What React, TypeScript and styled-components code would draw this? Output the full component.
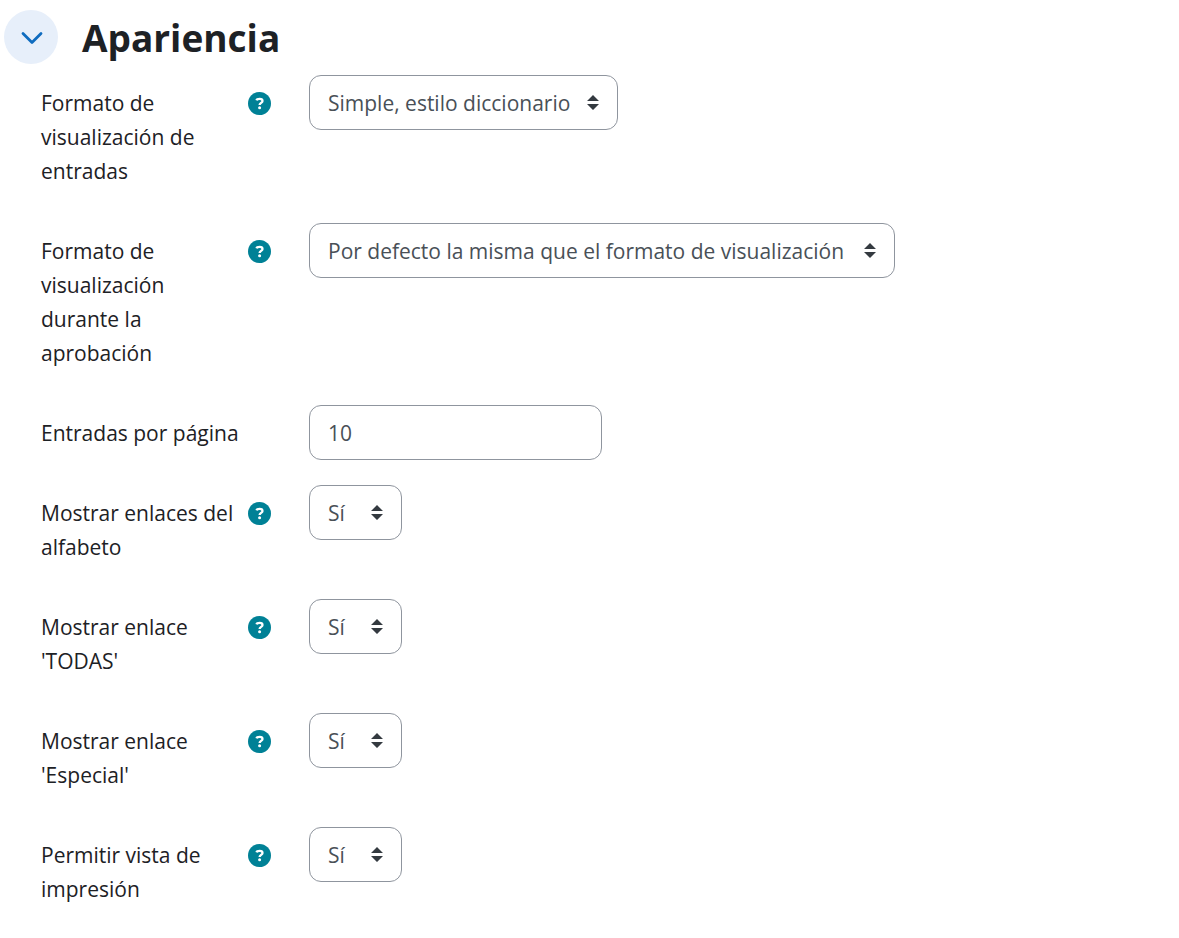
import React, { useId, useState } from 'react';
import styled, { createGlobalStyle } from 'styled-components';

const GlobalStyle = createGlobalStyle`
  *, *::before, *::after { box-sizing: border-box; }
  body {
    margin: 0;
    background: #fff;
    color: #1d2125;
    font: 400 21px/34px 'Segoe UI', 'Open Sans', sans-serif;
  }
`;

const Section = styled.section`
  padding: 10px 4px 24px;
`;

const Header = styled.header`
  display: flex;
  align-items: center;
  gap: 24px;
  margin-bottom: 11px;
`;

const Toggle = styled.button`
  display: flex;
  align-items: center;
  justify-content: center;
  width: 54px;
  height: 54px;
  padding: 2px 0 0 1px;
  border: 0;
  border-radius: 50%;
  background: #e7effa;
  color: #0f6cbf;
  cursor: pointer;
`;

const Title = styled.h3`
  margin: 0;
  padding-top: 2px;
  font-size: 37px;
  font-weight: 700;
  line-height: 52px;
`;

const Fields = styled.form`
  display: flex;
  flex-direction: column;
  gap: 25px;
  padding-left: 37px;
`;

const Row = styled.div`
  display: grid;
  grid-template-columns: 230px minmax(0, 1fr);
  column-gap: 38px;
  align-items: start;
`;

const LabelCell = styled.div`
  display: flex;
  justify-content: space-between;
  padding: 11px 0 10px;
`;

const Label = styled.label`
  max-width: 204px;
`;

const Help = styled.button`
  display: flex;
  align-items: center;
  flex: none;
  height: 34px;
  padding: 0;
  border: 0;
  background: none;
  color: #008196;
  cursor: pointer;
`;

const SelectBox = styled.div<{ $width: number }>`
  display: grid;
  align-items: center;
  width: ${(p) => p.$width}px;
  max-width: 100%;

  > * { grid-area: 1 / 1; }
  > svg {
    justify-self: end;
    margin-right: 19px;
    pointer-events: none;
  }
`;

const Select = styled.select`
  appearance: none;
  width: 100%;
  height: 55px;
  padding: 0 34px 0 18px;
  border: 1px solid #8f959e;
  border-radius: 12px;
  background: #fff;
  color: #495057;
  font: inherit;
`;

const TextInput = styled.input`
  width: 293px;
  max-width: 100%;
  height: 55px;
  padding: 0 18px;
  border: 1px solid #8f959e;
  border-radius: 12px;
  background: #fff;
  color: #495057;
  font: inherit;
`;

const ChevronIcon = ({ open }: { open: boolean }) => (
  <svg width="22" height="14" viewBox="0 0 22 14" fill="none" aria-hidden="true">
    <path
      d={open ? 'M2 2.5 11 11.5 20 2.5' : 'M2 11.5 11 2.5 20 11.5'}
      stroke="currentColor"
      strokeWidth="2.8"
      strokeLinecap="round"
      strokeLinejoin="round"
    />
  </svg>
);

const SortIcon = () => (
  <svg width="12" height="15" viewBox="0 0 12 15" fill="#343a40" aria-hidden="true">
    <path d="M6 0 12 6H0ZM6 15 0 9H12Z" />
  </svg>
);

const HelpIcon = () => (
  <svg width="23" height="23" viewBox="0 0 23 23" fill="none" aria-hidden="true">
    <circle cx="11.5" cy="11.5" r="11.5" fill="currentColor" />
    <path
      d="M8.5 8.4C8.8 7.2 9.8 6.9 11.7 6.9C13.4 6.9 14.5 7.7 14.5 9C14.5 10.8 11.6 11 11.6 13"
      stroke="#fff"
      strokeWidth="2.3"
    />
    <circle cx="11.6" cy="15.8" r="1.5" fill="#fff" />
  </svg>
);

const HelpButton = ({ topic }: { topic: string }) => (
  <Help type="button" aria-label={`Ayuda sobre ${topic}`}>
    <HelpIcon />
  </Help>
);

interface SelectFieldProps {
  label: string;
  options: string[];
  width: number;
}

const SelectField = ({ label, options, width }: SelectFieldProps) => {
  const id = useId();
  return (
    <Row>
      <LabelCell>
        <Label htmlFor={id}>{label}</Label>
        <HelpButton topic={label} />
      </LabelCell>
      <SelectBox $width={width}>
        <Select id={id}>
          {options.map((o) => (
            <option key={o}>{o}</option>
          ))}
        </Select>
        <SortIcon />
      </SelectBox>
    </Row>
  );
};

const yesNo = ['Sí', 'No'];

export default function App() {
  const [open, setOpen] = useState(true);
  return (
    <>
      <GlobalStyle />
      <Section>
        <Header>
          <Toggle
            type="button"
            aria-label="Apariencia"
            aria-expanded={open}
            onClick={() => setOpen(!open)}
          >
            <ChevronIcon open={open} />
          </Toggle>
          <Title>Apariencia</Title>
        </Header>
        {open && (
          <Fields>
            <SelectField
              label="Formato de visualización de entradas"
              options={['Simple, estilo diccionario']}
              width={309}
            />
            <SelectField
              label="Formato de visualización durante la aprobación"
              options={['Por defecto la misma que el formato de visualización']}
              width={586}
            />
            <Row>
              <LabelCell>
                <Label htmlFor="entries-per-page">Entradas por página</Label>
              </LabelCell>
              <TextInput id="entries-per-page" type="text" defaultValue="10" />
            </Row>
            <SelectField label="Mostrar enlaces del alfabeto" options={yesNo} width={93} />
            <SelectField label="Mostrar enlace 'TODAS'" options={yesNo} width={93} />
            <SelectField label="Mostrar enlace 'Especial'" options={yesNo} width={93} />
            <SelectField label="Permitir vista de impresión" options={yesNo} width={93} />
          </Fields>
        )}
      </Section>
    </>
  );
}
